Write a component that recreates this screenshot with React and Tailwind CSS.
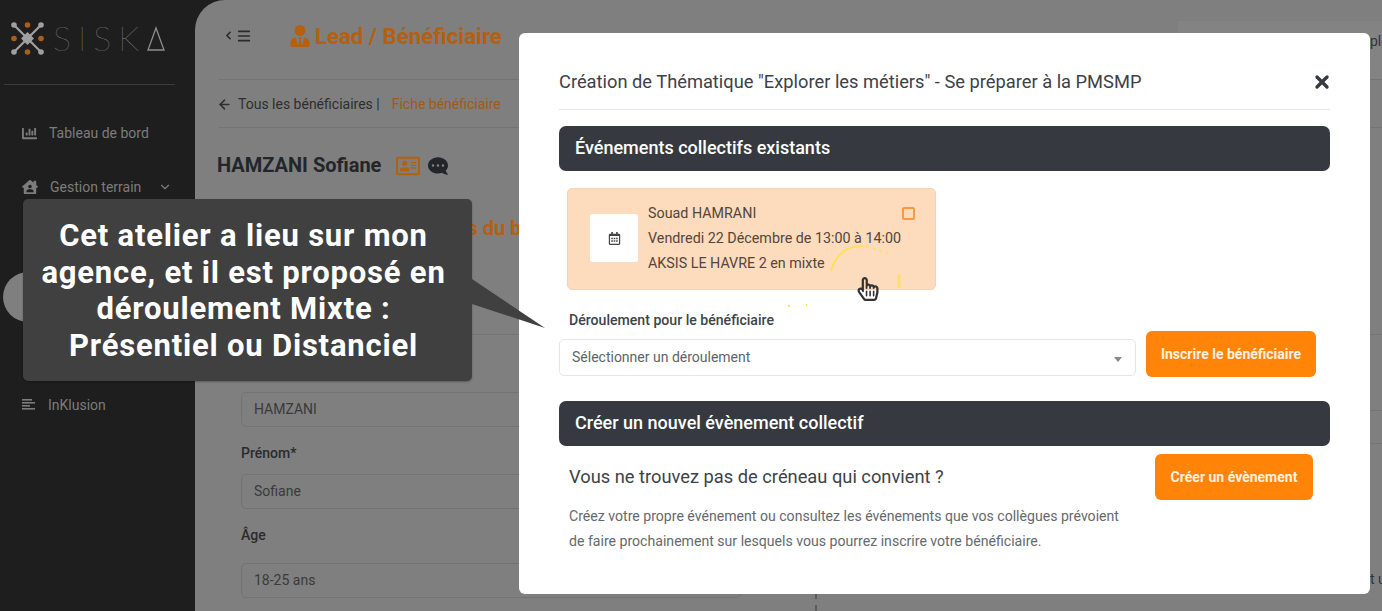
import { ChevronDown, ChevronLeft, Menu, ArrowLeft, X } from "lucide-react";
import { FaChartBar, FaHouseUser, FaUserTie, FaRegCalendarAlt, FaRegAddressCard, FaCommentDots, FaRegHandPointer } from "react-icons/fa";

const roboto = "font-['Roboto',sans-serif]";

function Logo() {
  return (
    <div className="flex items-center">
      <svg width="46" height="36" viewBox="0 0 46 36" className="shrink-0 text-[#a0a0a0]">
        <g stroke="currentColor" strokeWidth="2.2" strokeLinecap="round">
          <line x1="9" y1="5" x2="36" y2="32" />
          <line x1="36" y1="5" x2="9" y2="32" />
        </g>
        <g fill="currentColor">
          <circle cx="9" cy="5" r="2.8" />
          <circle cx="36" cy="5" r="2.8" />
          <circle cx="9" cy="32" r="2.8" />
          <circle cx="36" cy="32" r="2.8" />
          <path d="M22.5 12 L29 18.5 L22.5 25 L16 18.5 Z" />
        </g>
        <g fill="#a85f1e">
          <circle cx="22.5" cy="5" r="2.8" />
          <circle cx="22.5" cy="32" r="2.8" />
          <circle cx="9" cy="18.5" r="2.8" />
          <circle cx="36" cy="18.5" r="2.8" />
        </g>
      </svg>
      <span className="ml-[2px] flex items-center gap-[7px] text-[34px] leading-none font-['Lato',sans-serif] font-thin text-[#8e8e8e] shrink-0">
        <span>S</span>
        <span>I</span>
        <span>S</span>
        <span>K</span>
        <svg width="20" height="25" viewBox="0 0 20 25" fill="none" stroke="currentColor" strokeWidth="1.3">
          <path d="M10 2 L18 24 H2 Z" />
        </svg>
      </span>
    </div>
  );
}

function Sidebar() {
  return (
    <aside className="w-[195px] shrink-0 h-full bg-[#1e1e1e] text-[#7c7c7c] text-[14px]">
      <div className="ml-[4px] w-[171px] h-[85px] border-b border-[#3c3c3c] pl-[1px] pt-[20px]">
        <Logo />
      </div>
      <nav className="pl-[22px] pt-[38px] flex flex-col">
        <div className="flex items-center gap-[12px] h-[20px]">
          <FaChartBar className="text-[15px]" />
          <span>Tableau de bord</span>
        </div>
        <div className="flex items-center gap-[12px] h-[20px] mt-[34px]">
          <FaHouseUser className="text-[16px]" />
          <span>Gestion terrain</span>
          <ChevronDown size={14} className="ml-[5px]" />
        </div>
      </nav>
      <div className="ml-[3px] mt-[75px] h-[50px] bg-[#7f7f7f] rounded-l-[25px]" />
      <div className="pl-[22px] mt-[73px] flex items-center gap-[12px] h-[20px]">
        <svg width="14" height="14" viewBox="0 0 14 14" fill="currentColor">
          <rect x="0" y="1" width="10" height="1.6" />
          <rect x="0" y="4" width="13" height="1.6" />
          <rect x="0" y="7" width="8" height="1.6" />
          <rect x="0" y="10" width="13" height="1.6" />
        </svg>
        <span>InKlusion</span>
      </div>
    </aside>
  );
}

function Field({ label, value, labelGap }) {
  return (
    <div>
      {label && <div className={`text-[14px] font-medium text-[#2b2b2b] leading-[20px] ${labelGap}`}>{label}</div>}
      <div className="h-[35px] w-[500px] border border-[#737373] rounded-[5px] px-[12px] flex items-center text-[14px] text-[#3a3a3a]">
        {value}
      </div>
    </div>
  );
}

function Main() {
  return (
    <main className="flex-1 min-w-0 h-full bg-[#1e1e1e]">
      <div className="h-full bg-[#7f7f7f] rounded-tl-[30px] pl-[23px] flex flex-col">
        <header className="h-[81px] border-b border-[#747474] flex items-center">
          <div className="flex items-center text-[#2b2b2b] pb-[8px]">
            <ChevronLeft size={13} strokeWidth={3} className="ml-[4px]" />
            <Menu size={16} strokeWidth={2.5} className="ml-[1px]" />
          </div>
          <div className="ml-[37px] flex items-center gap-[2px] text-[#b3600f] pb-[8px]">
            <FaUserTie className="text-[22px]" />
            <span className="ml-[2px] text-[22.2px] font-bold leading-none">Lead / Bénéficiaire</span>
          </div>
          <div className="ml-auto mt-[21px] w-[204px] self-stretch bg-[#838383] pl-[192px] pt-[10px] text-[14px] text-[#333] whitespace-nowrap overflow-hidden">
            ploi
          </div>
        </header>
        <div className="h-[48px] pt-[1px] border-b border-[#747474] flex items-center text-[14px] text-[#2e2e2e]">
          <ArrowLeft size={15} strokeWidth={2.5} className="-ml-[1px]" />
          <span className="ml-[6px]">Tous les bénéficiaires |</span>
          <span className="ml-[12px] text-[#a05a1a]">Fiche bénéficiaire</span>
        </div>
        <div className="mt-[19px] flex items-center text-[#22262b]">
          <span className="-ml-[1px] text-[20px] font-bold leading-[36px]">HAMZANI Sofiane</span>
          <FaRegAddressCard className="ml-[15px] mt-[2px] text-[24px] text-[#b3600f]" />
          <FaCommentDots className="ml-[8px] mt-[2px] text-[20px] scale-x-[-1]" />
        </div>
        <div className="ml-[144px] mt-[33px] h-[24px] text-[20px] leading-[24px] font-bold text-[#b3600f] whitespace-nowrap">
          Informations du bénéficiaire
        </div>
        <div className="mt-[94px] flex-1 flex border-t border-[#747474]">
          <div className="ml-[23px] pt-[57px] flex flex-col">
            <Field value="HAMZANI" />
            <div className="mt-[16px]"><Field label="Prénom*" value="Sofiane" labelGap="mb-[11px]" /></div>
            <div className="mt-[16px]"><Field label="Âge" value="18-25 ans" labelGap="mb-[18px]" /></div>
          </div>
          <div className="ml-[74px] mt-[258px] h-[18px] border-l-2 border-dashed border-[#5c5c5c]" />
          <div className="ml-auto w-[100px] pt-[75px]">
            <div className="h-[34px] border-y border-[#747474]" />
            <div className="mt-[125px] pl-[88px] text-[14px] text-[#333] whitespace-nowrap overflow-hidden">
              t un
            </div>
          </div>
        </div>
      </div>
    </main>
  );
}

function SectionHeader({ children }) {
  return (
    <div className="h-[45px] bg-[#363a40] rounded-[7px] px-[16px] pb-[3px] flex items-center text-[18px] font-medium text-white">
      {children}
    </div>
  );
}

function OrangeButton({ children, className }) {
  return (
    <button className={`h-[46px] bg-[#ff8408] rounded-[6px] text-[14px] font-bold text-[#fff1e2] ${className}`}>
      {children}
    </button>
  );
}

function Modal() {
  return (
    <div className="absolute left-[519px] top-[33px] w-[851px] h-[561px] bg-white rounded-[6px] px-[40px] text-[#3d4147]">
      <div className="h-[77px] border-b border-[#e6e6e6] flex items-center justify-between pt-[22px]">
        <h2 className="text-[18.3px] leading-none">Création de Thématique "Explorer les métiers" - Se préparer à la PMSMP</h2>
        <X size={20} strokeWidth={4} className="text-[#363a40] -mr-[2px]" />
      </div>
      <div className="mt-[16px]">
        <SectionHeader>Événements collectifs existants</SectionHeader>
      </div>
      <div className="relative ml-[8px] mt-[17px] w-[369px] h-[102px] bg-[#fddbbd] rounded-[5px] border border-[#f3d3b6] flex items-center pl-[22px] pb-[2px]">
        <div className="w-[48px] h-[48px] bg-white rounded-[3px] flex items-center justify-center">
          <FaRegCalendarAlt className="text-[13px] text-[#444]" />
        </div>
        <div className="ml-[10px] text-[14.3px] leading-[25px] text-[#53463c]">
          <div>Souad HAMRANI</div>
          <div>Vendredi 22 Décembre de 13:00 à 14:00</div>
          <div>AKSIS LE HAVRE 2 en mixte</div>
        </div>
        <div className="absolute right-[20px] top-[18px] w-[13px] h-[13px] border-2 border-[#fb9a3d] rounded-[2px]" />
        <svg className="absolute left-[220px] top-[50px] overflow-visible" width="120" height="80" viewBox="0 0 120 80" fill="none">
          <path d="M43 32 C 48 14, 60 7, 75 7" stroke="#fbe25a" strokeWidth="2" />
          <path d="M78 7 L 103 15" stroke="#fbe25a" strokeWidth="1.5" strokeDasharray="3 4" />
          <path d="M111 35 L 111 49" stroke="#fbe25a" strokeWidth="2.5" />
          <path d="M0 67 L 2 67 M 18 66 L 19 66" stroke="#fbe25a" strokeWidth="2" />
        </svg>
        <FaRegHandPointer className="absolute left-[288px] top-[88px] text-[24px] text-[#333]" />
      </div>
      <div className="ml-[10px] mt-[21px] text-[14.1px] font-medium leading-[18px] text-[#3f4349]">Déroulement pour le bénéficiaire</div>
      <div className="mt-[2px] flex items-start">
        <div className="mt-[8px] w-[577px] h-[37px] border border-[#e4e6e8] rounded-[5px] px-[12px] flex items-center justify-between text-[14px] text-[#606469]">
          <span>Sélectionner un déroulement</span>
          <span className="w-0 h-0 border-x-[4px] border-x-transparent border-t-[5px] border-t-[#85888c] mr-[1px] mt-[3px]" />
        </div>
        <OrangeButton className="ml-[10px] w-[170px]">Inscrire le bénéficiaire</OrangeButton>
      </div>
      <div className="mt-[24px]">
        <SectionHeader>Créer un nouvel évènement collectif</SectionHeader>
      </div>
      <div className="flex items-start justify-between pl-[10px] pr-[17px] mt-[8px]">
        <div className="pt-[11px]">
          <div className="text-[18.3px] leading-[24px] text-[#3e4248]">Vous ne trouvez pas de créneau qui convient ?</div>
          <p className="mt-[15px] text-[14.1px] leading-[25px] text-[#66696e]">
            Créez votre propre événement ou consultez les événements que vos collègues prévoient
            <br />
            de faire prochainement sur lesquels vous pourrez inscrire votre bénéficiaire.
          </p>
        </div>
        <OrangeButton className="w-[158px]">Créer un évènement</OrangeButton>
      </div>
    </div>
  );
}

function Callout() {
  return (
    <div className="absolute left-[23px] top-[199px] w-[449px] h-[182px] bg-[#404040] rounded-[5px] flex items-center justify-center text-center text-white text-[31px] leading-[36.5px] font-bold tracking-[0.8px] pt-[2px] pr-[8px] shadow-[0_1px_2px_rgba(0,0,0,0.3)]">
      <span>
        Cet atelier a lieu sur mon
        <br />
        agence, et il est proposé en
        <br />
        déroulement Mixte :
        <br />
        Présentiel ou Distanciel
      </span>
      <svg className="absolute left-[449px] top-[78px]" width="76" height="56" viewBox="0 0 76 56">
        <path d="M0 2 L73 51 L0 27 Z" fill="#404040" />
      </svg>
    </div>
  );
}

export default function App() {
  return (
    <div className={`relative w-[1382px] h-[611px] overflow-hidden flex ${roboto}`}>
      <Sidebar />
      <Main />
      <Modal />
      <Callout />
    </div>
  );
}
